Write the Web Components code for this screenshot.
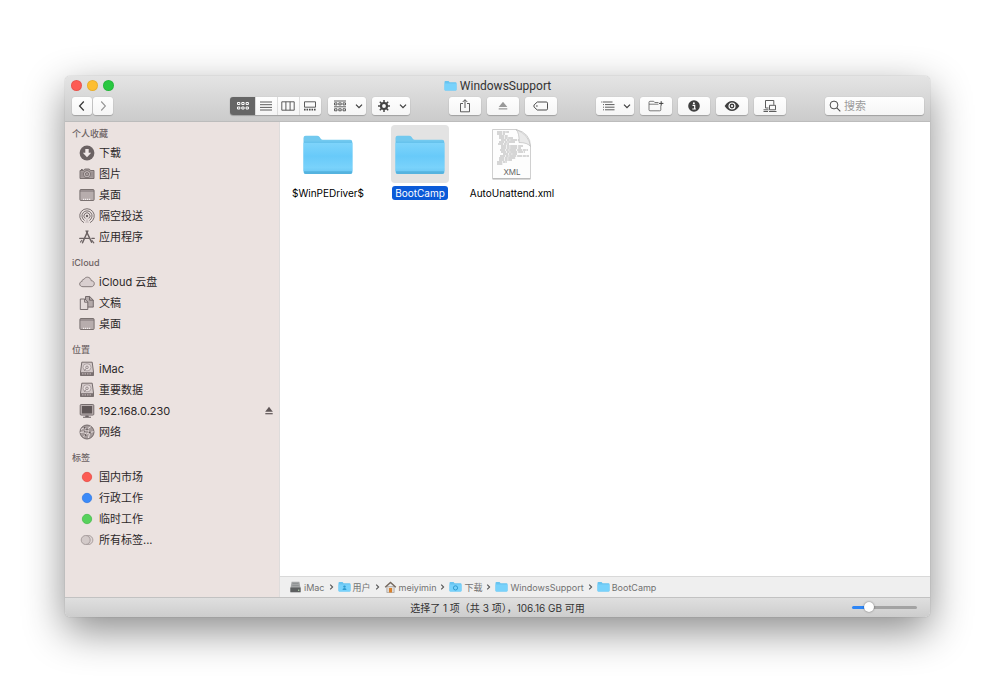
<!DOCTYPE html>
<html lang="zh-CN">
<head>
<meta charset="utf-8">
<title>WindowsSupport</title>
<style>
  html { background: #fff; }
  body {
    margin: 0;
    box-sizing: border-box;
    min-height: 100vh;
    padding: 76px 70px 76px 65px;
    display: flex;
    font-family: Inter, "Noto Sans CJK SC", sans-serif;
    font-size: 11px;
    color: #2b2829;
  }
  finder-window { flex: 1; }
</style>
</head>
<body>
<finder-window>
  <window-title slot="title">WindowsSupport</window-title>

  <side-group slot="sidebar" label="个人收藏">
    <side-item icon="download">下载</side-item>
    <side-item icon="camera">图片</side-item>
    <side-item icon="desktop">桌面</side-item>
    <side-item icon="airdrop">隔空投送</side-item>
    <side-item icon="apps">应用程序</side-item>
  </side-group>
  <side-group slot="sidebar" label="iCloud">
    <side-item icon="cloud">iCloud 云盘</side-item>
    <side-item icon="docs">文稿</side-item>
    <side-item icon="desktop">桌面</side-item>
  </side-group>
  <side-group slot="sidebar" label="位置">
    <side-item icon="disk">iMac</side-item>
    <side-item icon="disk">重要数据</side-item>
    <side-item icon="monitor" ejectable>192.168.0.230</side-item>
    <side-item icon="globe">网络</side-item>
  </side-group>
  <side-group slot="sidebar" label="标签">
    <side-item icon="tagred">国内市场</side-item>
    <side-item icon="tagblue">行政工作</side-item>
    <side-item icon="taggreen">临时工作</side-item>
    <side-item icon="tagall">所有标签...</side-item>
  </side-group>

  <file-item slot="files" icon="folder">$WinPEDriver$</file-item>
  <file-item slot="files" icon="folder" selected>BootCamp</file-item>
  <file-item slot="files" icon="xml">AutoUnattend.xml</file-item>

  <path-crumb slot="path" icon="hd">iMac</path-crumb>
  <path-crumb slot="path" icon="folderuser">用户</path-crumb>
  <path-crumb slot="path" icon="home">meiyimin</path-crumb>
  <path-crumb slot="path" icon="folderdl">下载</path-crumb>
  <path-crumb slot="path" icon="minifolder">WindowsSupport</path-crumb>
  <path-crumb slot="path" icon="minifolder" last>BootCamp</path-crumb>

  <span slot="status">选择了 1 项（共 3 项），106.16 GB 可用</span>
</finder-window>

<script>
const miniFolder = inner => `
  <path d="M.5 2q0-.9.9-.9h3.2l1 1.2h6q.9 0 .9.9V9.600q0 .9-.9.900H1.400q-.9 0-.9-.9z" fill="#68c4f0"/>
  <path d="M.5 3.600h12v6q0 .9-.9.900H1.400q-.9 0-.9-.9z" fill="#78d2fb"/>${inner}`;
const tag = (fill, edge) => `<circle cx="8" cy="8" r="4.700" fill="${fill}" stroke="${edge}" stroke-width=".7"/>`;

/* name: [width, height, markup]; the view box has the same size */
const ICONS = {
  download: [16, 16, `<circle cx="8" cy="8" r="7.400" fill="#6b6263"/><path d="M6.300 4h3.400v3.700h2.500L8 12.200 3.800 7.700h2.500z" fill="#efe7e6"/>`],
  camera: [16, 16, `<path d="M1 4.500h3.500L5.700 3h4.600l1.200 1.500H15v8H1z" fill="#a89e9e" stroke="#6f6667" stroke-width=".9"/><path d="M2 3.500h1.800" stroke="#6f6667"/><circle cx="8" cy="8.200" r="3.600" fill="#c9bfbf" stroke="#6f6667" stroke-width=".9"/><circle cx="8" cy="8.200" r="1.700" fill="#a89e9e" stroke="#6f6667" stroke-width=".8"/><path d="M3 6v5M13 6v5" stroke="#8a8080" stroke-width=".7"/>`],
  desktop: [16, 16, `<rect x=".9" y="2.500" width="14.200" height="11" rx="1" fill="#b7adad" stroke="#6f6667" stroke-width=".9"/><path d="M1 4h14" stroke="#6f6667" stroke-width=".8"/><path d="M4 12.300h8" stroke="#f4eeee" stroke-width="1.200" stroke-dasharray="1.200 .8"/>`],
  airdrop: [16, 16, `<g fill="none" stroke="#6b6263" stroke-width=".9" stroke-linecap="round"><path d="M4.600 14.500a7.300 7.300 0 1 1 6.800 0"/><path d="M5.300 12.300a5.100 5.100 0 1 1 5.400 0"/><path d="M6 10.300a3.100 3.100 0 1 1 4 0"/></g><circle cx="8" cy="8" r="1.200" fill="#6b6263"/><path d="M8 9.500l2 5.300H6z" fill="#cfc5c5"/>`],
  apps: [16, 16, `<g fill="none" stroke="#6b6263" stroke-linecap="round"><path d="M8.800 2L3.500 13.800" stroke-width="1.500"/><path d="M7.200 2l5.400 11.200" stroke-width="1.500"/><path d="M.7 9.300h9.300M12.800 9.300h2.500" stroke-width="1.300"/><path d="M1.500 13l1.200-1.500M13 11.500l1.800 2.300" stroke-width="1.200"/></g>`],
  cloud: [16, 16, `<path d="M4 12.700C2 12.700.7 11.600.7 10c0-1.400 1-2.500 2.400-2.600C3 5.900 4 5.100 5 5.400 5.600 4 6.900 3.200 8.400 3.200c2 0 3.600 1.500 3.800 3.500 1.800 0 3.100 1.300 3.100 2.900 0 1.800-1.300 3.100-3.100 3.100z" fill="#d9cfcf" stroke="#7a7071" stroke-width=".9"/>`],
  docs: [16, 16, `<path d="M6.500 1.500h4.200l3.600 3.600v7H6.500z" fill="#b3a9a9" stroke="#6b6263" stroke-width=".9"/><path d="M10.500 1.500v3.700h3.800" fill="none" stroke="#6b6263" stroke-width=".9"/><path d="M1.300 4h4.500l3 3v7.500H1.300z" fill="#e2d9d8" stroke="#6b6263" stroke-width=".9"/><path d="M5.600 4v3.200h3.200" fill="none" stroke="#6b6263" stroke-width=".9"/>`],
  disk: [16, 16, `<path d="M2.800 1.200h10.400l1.300 9.800v3.500h-13V11z" fill="#d3c9c9" stroke="#6b6263" stroke-width=".9"/><path d="M1.500 11.200h13v3.300h-13z" fill="#7a7071"/><path d="M3 12.900h10" stroke="#d5cbcb" stroke-width=".9" stroke-dasharray="1.500 1"/><ellipse cx="8" cy="6.300" rx="4" ry="3.600" fill="#e6dddd" stroke="#9b9192" stroke-width=".7"/><circle cx="8" cy="6.300" r="1.300" fill="none" stroke="#7b7172" stroke-width=".7"/><path d="M5 9.600l2-1.800" stroke="#7b7172" stroke-width=".8"/>`],
  monitor: [16, 16, `<rect x="1.200" y="1.500" width="13.600" height="10.600" rx="1" fill="#b9afaf" stroke="#6b6263" stroke-width=".9"/><rect x="2.900" y="3" width="10.200" height="7.500" fill="#5f5657"/><path d="M6.500 12.400h3l.3 1.400H12v1H4v-1h2.200z" fill="#6b6263"/>`],
  globe: [16, 16, `<circle cx="8" cy="8" r="7" fill="#a59b9b" stroke="#6b6263" stroke-width=".9"/><path d="M2 5.500l3.500-2L8 5.200 5.800 7.800l.8 2.900-2.200 2.200M8 5.200l3.800-2.600M8 5.200l2.800 3.300 3.800-.8M10.800 8.500L9.400 14M6.600 10.700l4.200-2.200M1.200 8.500l4.600-.7" fill="none" stroke="#efe7e6" stroke-width=".9"/><g fill="#5f5657"><circle cx="5.600" cy="3.600" r=".9"/><circle cx="8" cy="5.200" r=".9"/><circle cx="10.800" cy="8.500" r="1"/><circle cx="5.800" cy="7.800" r=".8"/><circle cx="6.600" cy="11" r=".9"/></g>`],
  tagred: [16, 16, tag("#fc5b53", "#e2443c")],
  tagblue: [16, 16, tag("#3b8af8", "#2a74e4")],
  taggreen: [16, 16, tag("#57d15c", "#3fb945")],
  tagall: [16, 16, `<circle cx="9.400" cy="8" r="4.500" fill="#ded5d4" stroke="#9a9091" stroke-width=".8"/><circle cx="6.700" cy="8" r="4.500" fill="#d3cac9" stroke="#9a9091" stroke-width=".8"/>`],
  eject: [12, 12, `<path d="M6 1.800L9.800 6.800H2.200z" fill="#5f5657"/><path d="M2.300 8.700h7.400" stroke="#5f5657" stroke-width="1.200"/>`],

  back: [12, 12, `<path d="M7.800 1.500L3.600 6l4.200 4.500" fill="none" stroke="#3a3a3a" stroke-width="1.300"/>`],
  forward: [12, 12, `<path d="M4.200 1.500L8.400 6l-4.200 4.500" fill="none" stroke="#969696" stroke-width="1.100"/>`],
  grid: [14, 12, `<g fill="none" stroke="#fff" stroke-width="1"><path d="M1.500 2.500h2.300v2H1.500zM5.800 2.500h2.300v2H5.800zM10.100 2.500h2.300v2h-2.300zM1.500 7h2.300v2H1.500zM5.800 7h2.300v2H5.800zM10.100 7h2.300v2h-2.300z"/></g>`],
  list: [14, 12, `<path d="M1 2h12M1 4.700h12M1 7.400h12M1 10h12" stroke="#4b4b4b" stroke-width=".9"/>`],
  columns: [14, 12, `<path d="M.8 1.800h12.400v8.400H.8zM4.900 1.800v8.400M9.100 1.800v8.400" fill="none" stroke="#4b4b4b" stroke-width=".9"/>`],
  gallery: [14, 12, `<path d="M1.500 1.800h11v5.400h-11z" fill="none" stroke="#4b4b4b" stroke-width=".9"/><path d="M1 9.700h12" stroke="#4b4b4b" stroke-width="1.700" stroke-dasharray="1.600 .9"/>`],
  arrange: [14, 14, `<g fill="none" stroke="#4b4b4b" stroke-width=".9"><path d="M1 2h12M1 7.800h12"/><path d="M1.500 3.900H4v2H1.500zM5.800 3.900h2.400v2H5.800zM10 3.900h2.500v2H10zM1.500 9.800H4v2H1.500zM5.800 9.800h2.400v2H5.800zM10 9.800h2.500v2H10z"/></g>`],
  gear: [14, 14, `<circle cx="7" cy="7" r="3" fill="none" stroke="#444" stroke-width="2.200"/><path d="M7 1v3M7 10v3M1 7h3M10 7h3M2.800 2.800l2 2M9.200 9.200l2 2M2.800 11.200l2-2M9.200 4.800l2-2" stroke="#444" stroke-width="1.500"/>`],
  chevron: [10, 10, `<path d="M2 3.600l3 3 3-3" fill="none" stroke="#3f3f3f" stroke-width="1.300"/>`],
  share: [14, 16, `<path d="M5 5.500H2.500v8.300h9V5.500H9M7 10V1.800M4.700 4L7 1.700 9.300 4" fill="none" stroke="#4b4b4b" stroke-width=".9"/>`],
  ejectgrey: [12, 12, `<path d="M6 1.800L10.300 7H1.700z" fill="#999"/><path d="M1.700 8.900h8.600" stroke="#999" stroke-width="1.200"/>`],
  label: [16, 12, `<path d="M4.300 2h9q1.200 0 1.200 1.200v5.600q0 1.200-1.200 1.200h-9L1.200 7.200Q.5 6 1.200 4.800z" fill="none" stroke="#4b4b4b" stroke-width="1"/><circle cx="3.900" cy="6" r=".8" fill="#4b4b4b"/>`],
  outline: [14, 12, `<path d="M2 2h9.500M4 4.600h9.500M4 7.200h9.500M4 9.800h9.500" stroke="#4b4b4b" stroke-width=".9"/><path d="M.3 2h1.100M2 4.600h1M2 7.200h1M2 9.800h1" stroke="#4b4b4b" stroke-width=".9"/>`],
  newfolder: [16, 12, `<path d="M10.500 2.500H6.800L5.700 1.300H2Q1 1.300 1 2.300v7.500q0 1 1 1h9.800q1 0 1-1V5.500M1 4.200h9.500" fill="none" stroke="#5a5a5a" stroke-width=".8"/><path d="M13.200 1.200v4.400M11 3.400h4.400" stroke="#3f3f3f" stroke-width="1"/>`],
  info: [14, 14, `<circle cx="7" cy="7" r="5.800" fill="#3f3f3f"/><circle cx="6.900" cy="4.200" r="1" fill="#fff"/><path d="M5.500 6.300h2.200v3.400M5.300 10h3.500" fill="none" stroke="#fff" stroke-width="1.200"/>`],
  eye: [16, 14, `<path d="M.6 7Q3.900 2 8 2t7.400 5Q12.100 12 8 12T.6 7z" fill="#3f3f3f"/><circle cx="8" cy="7" r="3" fill="none" stroke="#fff" stroke-width="1.200"/><circle cx="8" cy="7" r="1.100" fill="#fff"/>`],
  remote: [16, 14, `<g fill="none" stroke="#4b4b4b" stroke-width=".9"><path d="M6.500 9h-3V1.500h8.300v4.300M7.500 6.300h6v4.500h-6z"/><path d="M1.500 10.800h5M1.500 12.500h4.500M7 12.500h7.500"/></g>`],
  search: [12, 12, `<circle cx="5" cy="5" r="3.900" fill="none" stroke="#4b4b4b" stroke-width="1"/><path d="M7.800 7.800L11.300 11.300" stroke="#4b4b4b" stroke-width="1.100"/>`],
  crumb: [5, 8, `<path d="M1.200 1.700L3.600 4 1.200 6.300" fill="none" stroke="#555" stroke-width="1.100"/>`],

  minifolder: [13, 12, miniFolder("")],
  folderuser: [13, 12, miniFolder(`<circle cx="6.500" cy="5.600" r="1.200" fill="#2f9bd0"/><path d="M4.500 9q0-2 2-2t2 2z" fill="#2f9bd0"/>`)],
  folderdl: [13, 12, miniFolder(`<circle cx="6.500" cy="6.900" r="2.100" fill="none" stroke="#2f9bd0" stroke-width="1"/>`)],
  hd: [13, 12, `<path d="M2.600.8h7.800l1.200 6.700v3.700H1.400V7.500z" fill="#a3a5a6"/><path d="M1.400 6.500h10.200v4.700H1.400z" fill="#5d5f60"/><path d="M3.500 2.500h6M3.300 4.500h6.500" stroke="#8c8e8f" stroke-width=".8"/><circle cx="9.700" cy="9.300" r=".7" fill="#b7e0b0"/>`],
  home: [13, 12, `<path d="M2.800 5.500h7.400v6H2.800z" fill="#dedad6" stroke="#8b8580" stroke-width=".5"/><path d="M1.200 6.200L6.500 1.500l5.300 4.700" fill="none" stroke="#75695f" stroke-width="1.500"/><path d="M5 7h3v4.500H5z" fill="#d9812c"/>`],
  folder: [58, 58, `<path d="M4.500 13q0-2.200 2.200-2.200H18q1.700 0 2.600 1.300l1.200 1.700q.7 1 2 1h27.300q2.200 0 2.200 2.200V46H4.500z" fill="#72c9ef"/><path d="M4.500 18.500q0-1.800 1.800-1.800h45.400q1.800 0 1.800 1.800v28q0 2.500-2.500 2.500H7q-2.500 0-2.500-2.500z" fill="url(#f)"/><path d="M5 17.200h48" stroke="#4fb2e0" stroke-width=".7"/><path d="M5 48q.8 1 2 1h44q1.200 0 2-1v-1.800H5z" fill="#55b3df"/><defs><linearGradient id="f" x1="0" y1="0" x2="0" y2="1"><stop offset="0" stop-color="#80d5fb"/><stop offset=".45" stop-color="#68caf9"/><stop offset=".8" stop-color="#79d2fb"/><stop offset="1" stop-color="#68c5f2"/></linearGradient></defs>`],
};
{
  const w = [12, 8, 9, 14, 18, 16, 11, 22, 20, 28, 24, 14, 29, 17, 13, 10, 6];
  const x = [14, 14, 16, 16, 18, 16, 15, 18, 18, 17, 18, 20, 17, 16, 16, 14, 14];
  const lines = w.map((n, i) => `M${x[i]} ${7 + i * 2}h${n}`).join("");
  ICONS.xml = [58, 58, `<path d="M9.500 4.500h23.500Q47.500 8 47.500 21.500v32H9.500z" fill="#fdfdfd" stroke="#c4c4c4" stroke-width=".8"/><path d="${lines}" stroke="#8c8c8c" stroke-width=".7" stroke-dasharray="5 .7 3 .5 7 1"/><path d="M33 4.500Q36.500 8 36 17.500 44.500 17.500 47.500 21.500 46 9.500 33 4.500z" fill="#e9e9e9" stroke="#b5b5b5" stroke-width=".6"/><path d="M9.500 54H47.500" stroke="#9f9f9f" stroke-width=".8"/><text x="29" y="50" text-anchor="middle" font-size="8" font-weight="400" fill="#666">XML</text>`];
}

function makeIcon(name) {
  const icon = document.createElement("ui-icon");
  icon.setAttribute("name", name);
  return icon;
}

function define(name, html, setup) {
  const template = document.createElement("template");
  template.innerHTML = html;
  customElements.define(name, class extends HTMLElement {
    connectedCallback() {
      if (this.shadowRoot) return;
      const root = this.attachShadow({ mode: "open" });
      root.append(template.content.cloneNode(true));
      if (setup) setup(this, root);
    }
  });
}

define("ui-icon", `<style>:host{display:block;flex:none} svg{display:block}</style>`, (host, root) => {
  const [w, h, body] = ICONS[host.getAttribute("name")];
  const box = document.createElement("div");
  box.innerHTML = `<svg width="${w}" height="${h}" viewBox="0 0 ${w} ${h}" aria-hidden="true">${body}</svg>`;
  root.append(box);
});

define("window-title", `
<style>
  :host { display: flex; justify-content: center; align-items: center; gap: 3px; height: 20px; line-height: 16px; font-family: Roboto, sans-serif; font-size: 12px; color: #333; }
</style>
<ui-icon name="minifolder"></ui-icon><slot></slot>`);

define("tool-button", `
<style>
  :host { display: block; }
  button {
    width: 32px; height: 18px; padding: 0; border: 0; border-radius: 3px;
    display: flex; align-items: center; justify-content: center;
    background: linear-gradient(#fefefe, #f5f5f5);
    box-shadow: 0 1px 1px rgba(0,0,0,.2), 0 0 1px rgba(0,0,0,.2);
  }
  :host([menu]) button { width: 38px; gap: 7px; padding-left: 3px; }
  :host([nav]) button { width: 20px; }
  :host([segment]) button { width: 22px; border-radius: 0; box-shadow: inset 1px 0 #dcdcdc; }
  :host([pressed]) button { width: 25px; background: #666; box-shadow: none; }
  ui-icon[name=chevron] { display: none; }
  :host([menu]) ui-icon[name=chevron] { display: block; }
</style>
<button type="button"><ui-icon name="chevron"></ui-icon></button>`, (host, root) => {
  const button = root.querySelector("button");
  button.setAttribute("aria-label", host.getAttribute("label"));
  button.prepend(makeIcon(host.getAttribute("icon")));
});

define("search-field", `
<style>
  :host { display: block; }
  label {
    display: flex; align-items: center; gap: 3px; width: 99px; height: 18px; box-sizing: border-box;
    padding: 0 4px; border-radius: 3px; background: linear-gradient(#fefefe, #f5f5f5);
    box-shadow: 0 1px 1px rgba(0,0,0,.2), 0 0 1px rgba(0,0,0,.2);
  }
  input { flex: 1; min-width: 0; height: 18px; padding: 0; border: 0; outline: 0; background: none; font: inherit; color: #333; }
  input::placeholder { color: #9b9b9b; opacity: 1; }
</style>
<label><ui-icon name="search"></ui-icon><input type="text" placeholder="搜索" aria-label="搜索"></label>`);

define("side-group", `
<style>
  :host { display: block; margin-bottom: 8px; }
  h2 { margin: 0; padding-left: 7px; height: 16px; line-height: 14px; font-size: 9px; font-weight: 500; color: #6d6364; }
</style>
<h2></h2><slot></slot>`, (host, root) => {
  root.querySelector("h2").textContent = host.getAttribute("label");
});

define("side-item", `
<style>
  :host { display: block; }
  a { display: flex; align-items: center; gap: 4px; height: 21px; padding: 0 4px 0 14px; color: inherit; text-decoration: none; line-height: 21px; }
  ui-icon { margin-bottom: 2px; }
  span { flex: 1; }
  a ui-icon[name=eject] { display: none; }
  :host([ejectable]) ui-icon[name=eject] { display: block; }
</style>
<a href="#"><span><slot></slot></span><ui-icon name="eject"></ui-icon></a>`, (host, root) => {
  root.querySelector("a").prepend(makeIcon(host.getAttribute("icon")));
});

define("file-item", `
<style>
  :host { display: block; }
  button { width: 100%; padding: 0; border: 0; background: none; font: inherit; font-size: 10px; line-height: 13px; color: #000; display: flex; flex-direction: column; align-items: center; gap: 3px; }
  .thumb { border-radius: 4px; }
  .name { padding: 1px 3px 0; border-radius: 3px; white-space: nowrap; }
  :host([selected]) .thumb { background: #e3e3e3; }
  :host([selected]) .name { background: #0a5ad8; color: #fff; }
</style>
<button type="button"><span class="thumb"></span><span class="name"><slot></slot></span></button>`, (host, root) => {
  root.querySelector(".thumb").append(makeIcon(host.getAttribute("icon")));
});

define("path-crumb", `
<style>
  :host { display: flex; align-items: center; gap: 4px; }
  a { display: flex; align-items: center; gap: 2px; color: #727272; text-decoration: none; }
  :host([last]) ui-icon[name=crumb] { display: none; }
</style>
<a href="#"><slot></slot></a><ui-icon name="crumb"></ui-icon>`, (host, root) => {
  root.querySelector("a").prepend(makeIcon(host.getAttribute("icon")));
});

define("finder-window", `
<style>
  :host {
    display: flex; flex-direction: column; min-width: 0; border-radius: 5px; overflow: hidden; background: #fff;
    box-shadow: 0 0 1px rgba(0,0,0,.4), 0 14px 40px rgba(0,0,0,.46);
  }
  header { position: relative; background: linear-gradient(#e4e4e4, #cbcbcb); border-bottom: 1px solid #bcbcbc; padding-bottom: 6px; }
  .lights { position: absolute; left: 6px; top: 4px; display: flex; gap: 5px; }
  .lights button { width: 11px; height: 11px; padding: 0; border: 1px solid rgba(0,0,0,.08); border-radius: 50%; background: #fd5b53; }
  .lights button:nth-child(2) { background: #fdbe30; }
  .lights button:nth-child(3) { background: #28c840; }
  .tools { display: flex; padding: 1px 6px 0 7px; justify-content: space-between; }
  .set { display: flex; gap: 6px; }
  .nav { gap: 1px; }
  .gap { flex: 1; }
  .gap.wide { flex: 3; }
  .segments { display: flex; margin-right: 1px; border-radius: 3px; overflow: hidden; box-shadow: 0 1px 1px rgba(0,0,0,.2), 0 0 1px rgba(0,0,0,.2); }
  .body { flex: 1; display: grid; grid-template-columns: 215px minmax(0, 1fr); }
  nav { box-sizing: border-box; padding-top: 5px; background: #ebe2e0; border-right: 1px solid #dedcdc; }
  main { display: flex; flex-direction: column; }
  .files { flex: 1; display: grid; grid-template-columns: repeat(auto-fill, 92px); align-content: start; padding: 3px 2px; }
  .path { display: flex; align-items: center; gap: 4px; height: 20px; padding-left: 9px; font-size: 9px; background: #efefef; border-top: 1px solid #d9d9d9; }
  footer { display: grid; grid-template-columns: 1fr auto 1fr; align-items: center; height: 19px; padding: 0 13px; background: linear-gradient(#dfdfdf, #cdcdcd); border-top: 1px solid #c2c2c2; font-size: 10px; color: #333; }
  input[type=range] { appearance: none; justify-self: end; width: 65px; height: 11px; margin: 0; background: none; }
  input::-webkit-slider-runnable-track { height: 3px; border-radius: 2px; background: linear-gradient(90deg, #2e86f6 22%, #a3a3a3 22%); }
  input::-webkit-slider-thumb { appearance: none; width: 10px; height: 10px; margin-top: -4px; border-radius: 50%; background: #fff; box-shadow: 0 0 2px rgba(0,0,0,.5); }
</style>
<header>
  <slot name="title"></slot>
  <div class="lights"><button type="button" aria-label="关闭"></button><button type="button" aria-label="最小化"></button><button type="button" aria-label="缩放"></button></div>
  <div class="tools">
    <div class="set nav"><tool-button nav icon="back" label="后退"></tool-button><tool-button nav icon="forward" label="前进"></tool-button></div>
    <div class="gap wide"></div>
    <div class="set">
      <div class="segments">
        <tool-button segment pressed icon="grid" label="图标"></tool-button>
        <tool-button segment icon="list" label="列表"></tool-button>
        <tool-button segment icon="columns" label="分栏"></tool-button>
        <tool-button segment icon="gallery" label="画廊"></tool-button>
      </div>
      <tool-button menu icon="arrange" label="排列"></tool-button>
      <tool-button menu icon="gear" label="操作"></tool-button>
    </div>
    <div class="gap"></div>
    <div class="set">
      <tool-button icon="share" label="共享"></tool-button>
      <tool-button icon="ejectgrey" label="推出"></tool-button>
      <tool-button icon="label" label="标签"></tool-button>
    </div>
    <div class="gap"></div>
    <div class="set">
      <tool-button menu icon="outline" label="分组"></tool-button>
      <tool-button icon="newfolder" label="新建文件夹"></tool-button>
      <tool-button icon="info" label="简介"></tool-button>
      <tool-button icon="eye" label="快速查看"></tool-button>
      <tool-button icon="remote" label="连接"></tool-button>
    </div>
    <div class="gap"></div>
    <search-field></search-field>
  </div>
</header>
<div class="body">
  <nav><slot name="sidebar"></slot></nav>
  <main>
    <div class="files"><slot name="files"></slot></div>
    <div class="path"><slot name="path"></slot></div>
  </main>
</div>
<footer><i></i><slot name="status"></slot><input type="range" min="0" max="100" value="22" aria-label="图标大小"></footer>`);
</script>
</body>
</html>
